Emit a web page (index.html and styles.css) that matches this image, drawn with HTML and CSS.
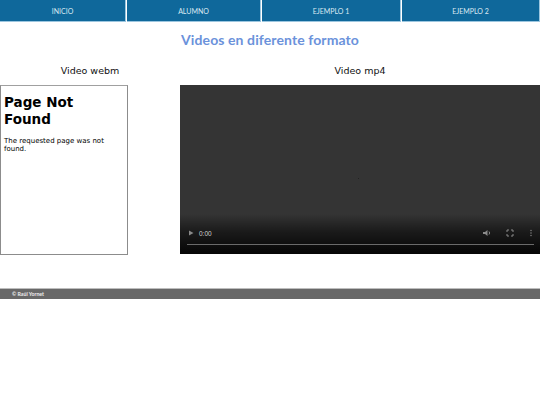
FILE: index.html
```html
<!DOCTYPE html>
<html lang="es">
<head>
<meta charset="utf-8">
<title>Videos</title>
<link rel="stylesheet" href="styles.css">
</head>
<body>
<nav class="nav">
  <a class="nav-item w1">INICIO</a>
  <a class="nav-item w2">ALUMNO</a>
  <a class="nav-item w3">EJEMPLO 1</a>
  <a class="nav-item w4">EJEMPLO 2</a>
</nav>
<h1 class="title">Videos en diferente formato</h1>
<main class="videos">
  <section class="col col-left">
    <h2 class="col-title">Video webm</h2>
    <div class="frame">
      <h3 class="nf-title">Page Not Found</h3>
      <p class="nf-text">The requested page was not found.</p>
    </div>
  </section>
  <section class="col col-right">
    <h2 class="col-title">Video mp4</h2>
    <div class="player">
      <span class="dot"></span>
      <div class="controls">
        <div class="ctrl-row">
          <svg class="ic" width="8" height="8" viewBox="0 0 8 8"><path d="M2 1.5 L6.5 4 L2 6.5 Z" fill="#8a8a8a"/></svg>
          <span class="time">0:00</span>
          <span class="spacer"></span>
          <svg class="ic" width="10" height="8" viewBox="0 0 10 8"><path d="M1 3 H3 L5.5 1 V7 L3 5 H1 Z" fill="#8a8a8a"/><path d="M7 2.5 Q8.3 4 7 5.5" stroke="#8a8a8a" fill="none" stroke-width="1"/></svg>
          <svg class="ic" width="8" height="8" viewBox="0 0 8 8"><path d="M1 3 V1 H3 M5 1 H7 V3 M7 5 V7 H5 M3 7 H1 V5" stroke="#8a8a8a" fill="none" stroke-width="1"/></svg>
          <svg class="ic" width="6" height="8" viewBox="0 0 6 8"><circle cx="3" cy="1.5" r="0.7" fill="#8a8a8a"/><circle cx="3" cy="4" r="0.7" fill="#8a8a8a"/><circle cx="3" cy="6.5" r="0.7" fill="#8a8a8a"/></svg>
        </div>
        <div class="track"></div>
      </div>
    </div>
  </section>
</main>
<footer class="footer">© Raúl Yornet</footer>
</body>
</html>
```
FILE: styles.css
```css
html, body {
  margin: 0;
  padding: 0;
  background: #ffffff;
}
body {
  font-family: Lato, "Liberation Sans", sans-serif;
  width: 540px;
}
.nav {
  display: flex;
  gap: 1px;
  height: 22px;
  background: #ffffff;
}
.nav-item {
  display: flex;
  align-items: center;
  justify-content: center;
  background: #0f689b;
  color: #dbe8f2;
  font-size: 7px;
  border-right: 1px solid #9cc6df;
  border-bottom: 1px solid #9cc6df;
  box-sizing: border-box;
  height: 22px;
}
.w1 { width: 126px; }
.w2 { width: 134px; }
.w3 { width: 139px; }
.w4 { width: 137px; flex: 1; }
.title {
  margin: 10px 0 0;
  text-align: center;
  font-size: 14px;
  font-weight: 700;
  color: #6b92db;
  height: 16px;
  line-height: 16px;
  letter-spacing: 0.1px;
}
.videos {
  display: flex;
  margin-top: 17px;
}
.col-title {
  margin: 0;
  text-align: center;
  font-family: "DejaVu Sans", Verdana, sans-serif;
  font-weight: 400;
  font-size: 9.5px;
  color: #111;
  height: 20px;
  line-height: 12px;
}
.col-left {
  width: 180px;
}
.col-right {
  width: 360px;
}
.frame {
  width: 128px;
  height: 170px;
  box-sizing: border-box;
  border: 1px solid #8c8c8c;
  border-top-color: #a0a0a0;
  padding: 0 3px;
  font-family: "DejaVu Sans", Verdana, sans-serif;
  color: #000;
}
.nf-title {
  margin: 8px 0 0;
  font-size: 13.5px;
  line-height: 16.5px;
  font-weight: 700;
}
.nf-text {
  margin: 10px 0 0;
  font-family: "DejaVu Sans", Verdana, sans-serif;
  font-size: 7px;
  line-height: 8px;
  color: #000;
}
.player {
  position: relative;
  width: 360px;
  height: 169px;
  background: #343434;
}
.dot {
  position: absolute;
  left: 178px;
  top: 93px;
  width: 1px;
  height: 1px;
  background: #222;
}
.controls {
  position: absolute;
  left: 0;
  right: 0;
  bottom: 0;
  height: 40px;
  background: linear-gradient(to bottom, rgba(0,0,0,0) 0%, rgba(0,0,0,0.5) 45%, rgba(0,0,0,0.9) 100%);
  display: flex;
  flex-direction: column;
  justify-content: flex-end;
  padding: 0 6px 9px 7px;
  box-sizing: border-box;
}
.ctrl-row {
  display: flex;
  align-items: center;
  gap: 6px;
  height: 10px;
  margin-bottom: 6px;
}
.time {
  font-family: "Liberation Sans", Arial, sans-serif;
  font-size: 6.5px;
  color: #cfcfcf;
  margin-left: -2px;
}
.spacer { flex: 1; }
.ic { display: block; }
.ic + .ic { margin-left: 8px; }
.track {
  height: 1px;
  background: #6a6a6a;
}
.footer {
  margin-top: 33px;
  height: 10px;
  background: #686868;
  border-top: 1px solid #bdbdbd;
  color: #ededed;
  font-size: 5.2px;
  font-weight: 700;
  line-height: 10px;
  padding-left: 12px;
}
```
